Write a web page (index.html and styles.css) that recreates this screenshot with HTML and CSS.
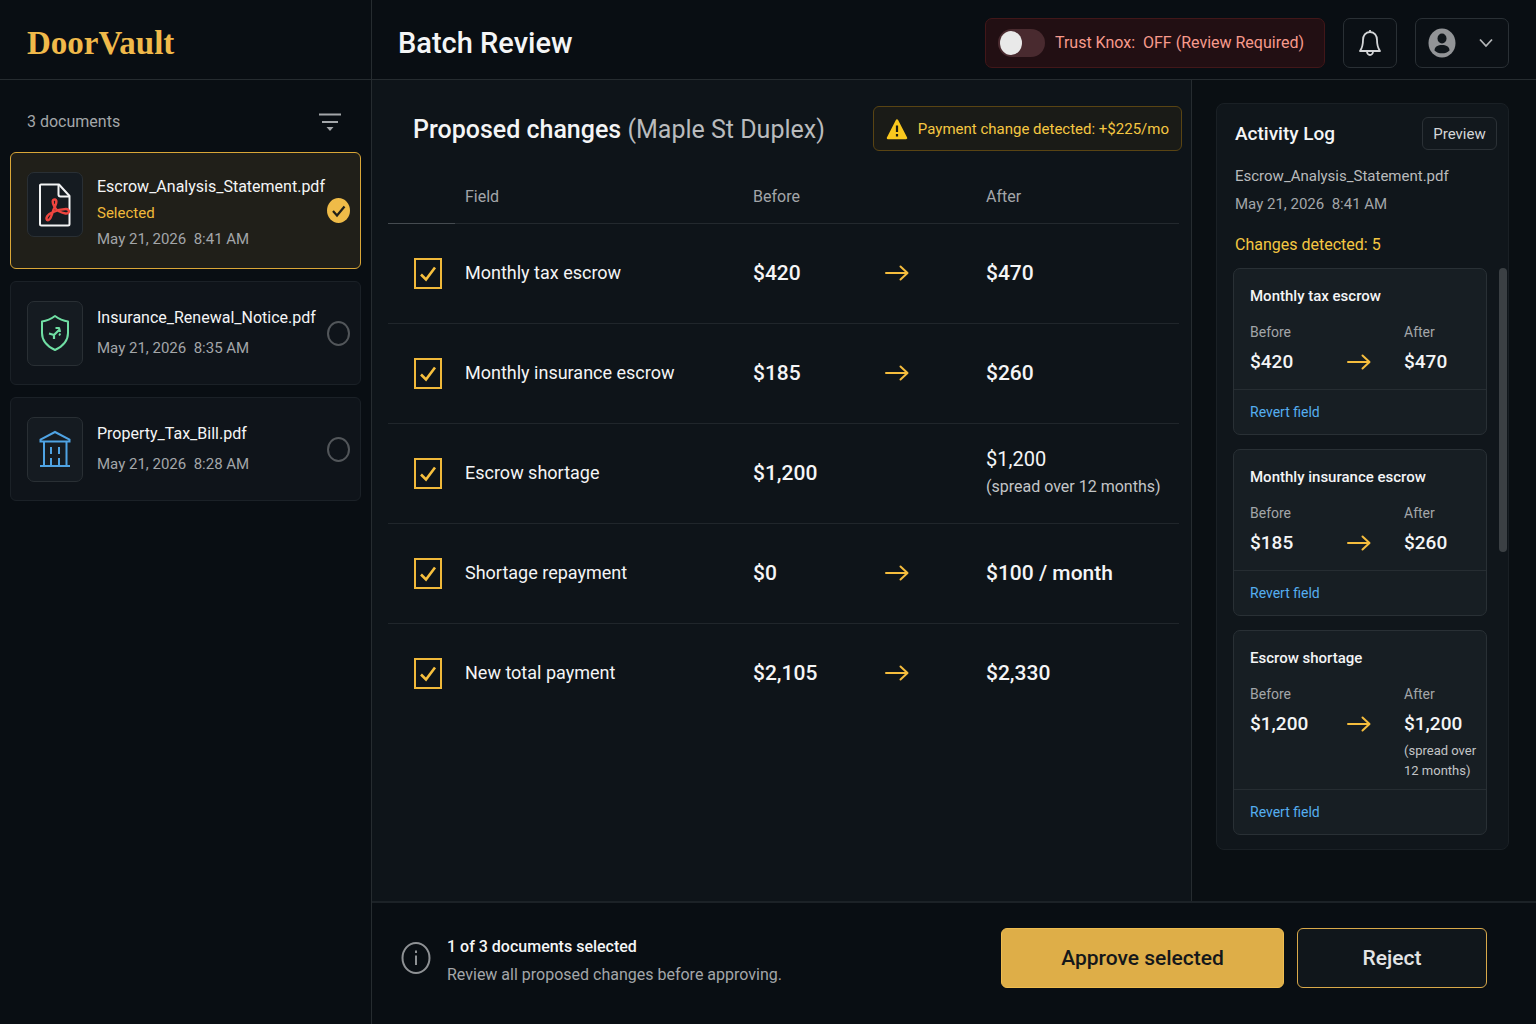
FILE: index.html
```html
<!DOCTYPE html>
<html lang="en">
<head>
    <meta charset="UTF-8">
    <meta name="viewport" content="width=device-width, initial-scale=1.0">
    <title>DoorVault - Batch Review</title>
    <link rel="stylesheet" href="styles.css">
</head>
<body>
    <!-- shared icons -->
    <svg class="icon-defs" aria-hidden="true">
        <symbol id="arrow" viewBox="0 0 24 18">
            <path d="M1 9h21M15.5 2.5L22.5 9l-7 6.500" fill="none" stroke="currentColor" stroke-width="2" stroke-linecap="round" stroke-linejoin="round"/>
        </symbol>
    </svg>

    <aside class="sidebar">
        <div class="brand"><a href="#">DoorVault</a></div>

        <div class="docs-header">
            <span>3 documents</span>
            <button class="filter-btn" type="button" aria-label="Filter documents">
                <svg width="24" height="20" viewBox="0 0 24 20">
                    <path d="M1 2.500h22M4 10h16" fill="none" stroke="#a3a6a9" stroke-width="2"/>
                    <path d="M8.500 15h7L12 19z" fill="#a3a6a9"/>
                </svg>
            </button>
        </div>

        <div class="doc-list">
            <label class="doc selected">
                <span class="doc-icon">
                    <svg width="32" height="44" viewBox="0 0 32 44" fill="none">
                        <path d="M2 1.500H20L30.500 13V41a1.500 1.500 0 0 1-1.500 1.500H2.500A1.500 1.500 0 0 1 1 41V2.500A1 1 0 0 1 2 1.500z" stroke="#f2f3f4" stroke-width="2" stroke-linejoin="round"/>
                        <path d="M19.500 2V11.500a2 2 0 0 0 2 2H30" stroke="#f2f3f4" stroke-width="2"/>
                        <path d="M14.500 26.500c2-3.500 4.500-9 1.500-10-3-.5-3 3.500-.5 7.500 2 3.500 6 5.500 11 6.500 4.500.5 4.500-4.500.5-4.500-4.500 0-10 1.500-14 3.500-4.500 2-6.500 5.500-5 7.500 2.500 1.500 5-4.500 6.500-10.500z" stroke="#ee453f" stroke-width="2.400" stroke-linejoin="round"/>
                    </svg>
                </span>
                <span class="doc-info">
                    <span class="doc-name">Escrow_Analysis_Statement.pdf</span>
                    <span class="doc-state">Selected</span>
                    <span class="doc-date">May 21, 2026&nbsp; 8:41 AM</span>
                </span>
                <input class="doc-radio" type="radio" name="doc" checked>
            </label>

            <label class="doc">
                <span class="doc-icon">
                    <svg width="30" height="38" viewBox="0 0 30 38" fill="none" stroke="#70dfa4" stroke-linejoin="round">
                        <path d="M15 2C11 5 7 6.800 2 7.500V19c0 8 5.500 13.500 13 17 7.500-3.500 13-9 13-17V7.500C23 6.800 19 5 15 2z" stroke-width="2"/>
                        <path d="M9 19.500l5 1.500v4M14 21l6-6M15.500 14h3.500l1 4M19 20l1.500 1" stroke-width="2.200"/>
                    </svg>
                </span>
                <span class="doc-info">
                    <span class="doc-name">Insurance_Renewal_Notice.pdf</span>
                    <span class="doc-date">May 21, 2026&nbsp; 8:35 AM</span>
                </span>
                <input class="doc-radio" type="radio" name="doc">
            </label>

            <label class="doc">
                <span class="doc-icon">
                    <svg width="32" height="38" viewBox="0 0 32 38" fill="none" stroke="#4fa3e3" stroke-width="2">
                        <path d="M1.500 11.500V9.500L16 2l14.500 7.500v2zM5 12v23M27.500 12v23M1 36h30M12 17v7M12 28v8M20 17v7M20 28v8"/>
                    </svg>
                </span>
                <span class="doc-info">
                    <span class="doc-name">Property_Tax_Bill.pdf</span>
                    <span class="doc-date">May 21, 2026&nbsp; 8:28 AM</span>
                </span>
                <input class="doc-radio" type="radio" name="doc">
            </label>
        </div>
    </aside>

    <div class="page">
        <header class="topbar">
            <h1>Batch Review</h1>
            <label class="trust">
                <input class="switch" type="checkbox">
                <span>Trust Knox:&nbsp; OFF (Review Required)</span>
            </label>
            <button class="icon-btn bell" type="button" aria-label="Notifications">
                <svg width="22" height="28" viewBox="0 0 22 28" fill="none" stroke="#d4d6d8" stroke-width="1.800" stroke-linejoin="round">
                    <path d="M11 3c-4.500 0-7 3.500-7 8 0 6-.8 8-3 11h20c-2.200-3-3-5-3-11 0-4.500-2.500-8-7-8zM11 3V1M8 22.500a3 3.500 0 0 0 6 0"/>
                </svg>
            </button>
            <button class="icon-btn account" type="button" aria-label="Account menu">
                <svg width="28" height="30" viewBox="0 0 28 30">
                    <ellipse cx="14" cy="15" rx="13.500" ry="14.500" fill="#929497"/>
                    <ellipse cx="14" cy="10.500" rx="4.500" ry="5" fill="#10161b"/>
                    <path d="M6.500 22.500c0-4 3.500-5.500 7.500-5.500s7.500 1.500 7.500 5.500c-2 2-4.500 2.800-7.500 2.800s-5.500-.8-7.500-2.800z" fill="#10161b"/>
                </svg>
                <svg width="14" height="10" viewBox="0 0 14 10">
                    <path d="M1 1.500l6 6.500 6-6.500" fill="none" stroke="#b4b6b8" stroke-width="1.800"/>
                </svg>
            </button>
        </header>

        <div class="content">
            <main class="changes">
                <div class="changes-header">
                    <h2>Proposed changes <span>(Maple St Duplex)</span></h2>
                    <div class="alert">
                        <svg width="22" height="22" viewBox="0 0 22 22">
                            <path d="M11 2.500L20 20H2z" fill="#fac81e" stroke="#fac81e" stroke-width="2.500" stroke-linejoin="round"/>
                            <path d="M11 7.500v6.500M11 16v2.500" stroke="#1b1a12" stroke-width="2.200"/>
                        </svg>
                        <span>Payment change detected: +$225/mo</span>
                    </div>
                </div>

                <table class="fields">
                    <thead>
                        <tr>
                            <th class="col-check" aria-label="Include"></th>
                            <th class="col-field">Field</th>
                            <th class="col-before">Before</th>
                            <th class="col-arrow" aria-label="Change"></th>
                            <th class="col-after">After</th>
                        </tr>
                    </thead>
                    <tbody>
                        <tr>
                            <td><input class="check" type="checkbox" id="f1" checked></td>
                            <td class="name"><label for="f1">Monthly tax escrow</label></td>
                            <td class="amount">$420</td>
                            <td><svg class="arrow"><use href="#arrow"/></svg></td>
                            <td class="amount">$470</td>
                        </tr>
                        <tr>
                            <td><input class="check" type="checkbox" id="f2" checked></td>
                            <td class="name"><label for="f2">Monthly insurance escrow</label></td>
                            <td class="amount">$185</td>
                            <td><svg class="arrow"><use href="#arrow"/></svg></td>
                            <td class="amount">$260</td>
                        </tr>
                        <tr>
                            <td><input class="check" type="checkbox" id="f3" checked></td>
                            <td class="name"><label for="f3">Escrow shortage</label></td>
                            <td class="amount">$1,200</td>
                            <td></td>
                            <td class="amount-note">$1,200<small>(spread over 12 months)</small></td>
                        </tr>
                        <tr>
                            <td><input class="check" type="checkbox" id="f4" checked></td>
                            <td class="name"><label for="f4">Shortage repayment</label></td>
                            <td class="amount">$0</td>
                            <td><svg class="arrow"><use href="#arrow"/></svg></td>
                            <td class="amount">$100 / month</td>
                        </tr>
                        <tr>
                            <td><input class="check" type="checkbox" id="f5" checked></td>
                            <td class="name"><label for="f5">New total payment</label></td>
                            <td class="amount">$2,105</td>
                            <td><svg class="arrow"><use href="#arrow"/></svg></td>
                            <td class="amount">$2,330</td>
                        </tr>
                    </tbody>
                </table>
            </main>

            <aside class="activity">
                <section class="log">
                    <div class="log-header">
                        <h3>Activity Log</h3>
                        <button class="preview-btn" type="button">Preview</button>
                    </div>
                    <p class="log-file">Escrow_Analysis_Statement.pdf</p>
                    <p class="log-date">May 21, 2026&nbsp; 8:41 AM</p>
                    <p class="log-count">Changes detected: 5</p>

                    <div class="log-body">
                        <div class="log-list">
                            <article class="entry">
                                <h4>Monthly tax escrow</h4>
                                <div class="entry-values">
                                    <div><span>Before</span><strong>$420</strong></div>
                                    <svg class="arrow"><use href="#arrow"/></svg>
                                    <div><span>After</span><strong>$470</strong></div>
                                </div>
                                <div class="entry-footer"><a href="#">Revert field</a></div>
                            </article>
                            <article class="entry">
                                <h4>Monthly insurance escrow</h4>
                                <div class="entry-values">
                                    <div><span>Before</span><strong>$185</strong></div>
                                    <svg class="arrow"><use href="#arrow"/></svg>
                                    <div><span>After</span><strong>$260</strong></div>
                                </div>
                                <div class="entry-footer"><a href="#">Revert field</a></div>
                            </article>
                            <article class="entry">
                                <h4>Escrow shortage</h4>
                                <div class="entry-values">
                                    <div><span>Before</span><strong>$1,200</strong></div>
                                    <svg class="arrow"><use href="#arrow"/></svg>
                                    <div><span>After</span><strong>$1,200</strong><small>(spread over 12 months)</small></div>
                                </div>
                                <div class="entry-footer"><a href="#">Revert field</a></div>
                            </article>
                        </div>
                        <div class="scrollbar"><div class="scroll-thumb"></div></div>
                    </div>
                </section>
            </aside>
        </div>

        <footer class="actions">
            <svg width="30" height="32" viewBox="0 0 30 32" fill="none" stroke="#8e9194">
                <ellipse cx="15" cy="16" rx="13.500" ry="15" stroke-width="2"/>
                <path d="M15 13.500V23M15 8.500v2.500" stroke-width="2"/>
            </svg>
            <div class="summary">
                <p class="summary-title">1 of 3 documents selected</p>
                <p class="summary-text">Review all proposed changes before approving.</p>
            </div>
            <button class="btn approve" type="button">Approve selected</button>
            <button class="btn reject" type="button">Reject</button>
        </footer>
    </div>
</body>
</html>
```
FILE: styles.css
```css
* {
    box-sizing: border-box;
}

body {
    margin: 0;
    min-height: 100vh;
    display: grid;
    grid-template-columns: 372px 1fr;
    background-color: #090e13;
    color: #f4f5f6;
    font-family: Roboto, "Liberation Sans", sans-serif;
    font-size: 16px;
    line-height: 20px;
}

h1, h2, h3, h4, p {
    margin: 0;
    font-weight: 500;
}

button, input {
    margin: 0;
    font-family: inherit;
    cursor: pointer;
}

a {
    text-decoration: none;
}

.icon-defs {
    position: absolute;
    width: 0;
    height: 0;
}

.arrow {
    display: block;
    width: 26px;
    height: 18px;
    color: #f5bd3d;
}

/* Sidebar */
.sidebar {
    border-right: 1px solid #262c30;
}

.brand {
    height: 80px;
    padding: 6px 27px 0;
    display: flex;
    align-items: center;
    border-bottom: 1px solid #262c30;
}

.brand a {
    color: #f0b94a;
    font-family: "Liberation Serif", serif;
    font-size: 33px;
    font-weight: bold;
    line-height: 40px;
}

.docs-header {
    display: flex;
    justify-content: space-between;
    align-items: center;
    height: 72px;
    padding: 12px 29px 0 27px;
    color: #a3a6a9;
}

.filter-btn {
    display: flex;
    padding: 0;
    border: none;
    background: none;
}

.doc-list {
    display: flex;
    flex-direction: column;
    gap: 12px;
    padding: 0 10px;
}

.doc {
    display: flex;
    align-items: center;
    min-height: 104px;
    padding: 0 10px 0 16px;
    border: 1px solid #1b2127;
    border-radius: 6px;
    background-color: #0f141a;
    cursor: pointer;
}

.doc.selected {
    min-height: 117px;
    border-color: #d9a637;
    background-color: #201f19;
}

.doc-icon {
    display: flex;
    justify-content: center;
    align-items: center;
    flex: none;
    width: 56px;
    height: 65px;
    margin-right: 14px;
    border: 1px solid #292f34;
    border-radius: 7px;
    background-color: #151b21;
}

.doc.selected .doc-icon {
    margin-bottom: 12px;
}

.doc-info {
    display: flex;
    flex-direction: column;
    flex: 1;
    gap: 10px;
    min-width: 0;
}

.doc.selected .doc-info {
    gap: 6px;
    padding-top: 4px;
}

.doc-name {
    white-space: nowrap;
}

.doc-state,
.doc-date {
    font-size: 15px;
}

.doc-state {
    color: #f0b93a;
}

.doc-date {
    color: #a3a6a9;
}

.doc-radio {
    appearance: none;
    flex: none;
    width: 23px;
    height: 25px;
    border: 2px solid #52565a;
    border-radius: 50%;
}

.doc-radio:checked {
    border: none;
    background: #efbb48 url("data:image/svg+xml,%3Csvg xmlns='http://www.w3.org/2000/svg' viewBox='0 0 23 25'%3E%3Cpath d='M6 13l4 4.500 7.500-9' fill='none' stroke='%23201f19' stroke-width='2.200'/%3E%3C/svg%3E") center / contain no-repeat;
}

/* Top bar */
.page {
    display: flex;
    flex-direction: column;
    min-width: 0;
}

.topbar {
    display: flex;
    align-items: center;
    height: 80px;
    padding: 6px 27px 0 26px;
    border-bottom: 1px solid #262c30;
}

.topbar h1 {
    flex: 1;
    font-size: 29px;
    line-height: 36px;
}

.trust {
    display: flex;
    align-items: center;
    gap: 10px;
    height: 50px;
    padding: 0 20px 0 12px;
    border: 1px solid #421719;
    border-radius: 7px;
    background-color: #220f13;
    color: #f79a8c;
    cursor: pointer;
}

.switch {
    appearance: none;
    display: flex;
    align-items: center;
    width: 47px;
    height: 28px;
    padding: 2px;
    border-radius: 14px;
    background-color: #492a2f;
}

.switch::before {
    content: "";
    width: 22px;
    height: 24px;
    border-radius: 50%;
    background-color: #e9e9e9;
}

.switch:checked::before {
    margin-left: auto;
}

.icon-btn {
    display: flex;
    justify-content: center;
    align-items: center;
    height: 50px;
    margin-left: 18px;
    padding: 0;
    border: 1px solid #2a3035;
    border-radius: 7px;
    background-color: #0b1015;
}

.bell {
    width: 54px;
}

.account {
    gap: 23px;
    width: 94px;
    padding-right: 3px;
}

/* Proposed changes */
.content {
    display: grid;
    grid-template-columns: 1fr 345px;
    flex: 1;
}

.changes {
    padding: 26px 9px 0 16px;
    background-color: #0e1419;
}

.changes-header {
    display: flex;
    justify-content: space-between;
    align-items: center;
    padding-left: 25px;
}

.changes-header h2 {
    padding-top: 2px;
    font-size: 25px;
    line-height: 32px;
}

.changes-header h2 span {
    color: #b9bbbd;
    font-weight: 400;
}

.alert {
    display: flex;
    align-items: center;
    gap: 10px;
    height: 45px;
    padding: 0 12px;
    border: 1px solid #594413;
    border-radius: 6px;
    background-color: #1a1b17;
    color: #f5c742;
    font-size: 15px;
}

.fields {
    width: calc(100% - 3px);
    border-collapse: collapse;
    table-layout: fixed;
    font-size: 18px;
    line-height: 24px;
}

.fields th {
    height: 72px;
    padding: 20px 0 0;
    border-bottom: 1px solid #23292e;
    color: #a3a6a9;
    font-size: 16px;
    font-weight: 400;
    text-align: left;
}

.fields th.col-check {
    width: 67px;
    border-bottom-color: #454b50;
}

.fields th.col-field {
    width: 298px;
    padding-left: 10px;
}

.col-before {
    width: 131px;
}

.col-arrow {
    width: 102px;
}

.fields td {
    height: 100px;
    padding: 0;
    border-bottom: 1px solid #20262b;
}

.fields td.name {
    padding-left: 10px;
}

.fields tr:last-child td {
    border-bottom: none;
}

.fields .amount {
    font-size: 21px;
    font-weight: 500;
}

.fields .amount-note {
    font-size: 20px;
    line-height: 28px;
}

.amount-note small {
    display: block;
    color: #c3c5c7;
    font-size: 16px;
}

.check {
    appearance: none;
    display: block;
    width: 28px;
    height: 31px;
    margin-left: 26px;
    border: 2px solid #f0b93a;
}

.check:checked {
    background: url("data:image/svg+xml,%3Csvg xmlns='http://www.w3.org/2000/svg' viewBox='0 0 24 27'%3E%3Cpath d='M5 14.500l5 5 9-12' fill='none' stroke='%23f7c03e' stroke-width='2.600'/%3E%3C/svg%3E") center / contain no-repeat;
}

/* Activity log */
.activity {
    padding: 23px 27px 40px 24px;
    border-left: 1px solid #262c30;
    background-color: #0a0f13;
}

.log {
    padding: 13px 1px 14px 16px;
    border: 1px solid #1a2025;
    border-radius: 8px;
    background-color: #10161b;
}

.log-header {
    display: flex;
    justify-content: space-between;
    align-items: center;
    padding: 0 10px 0 2px;
}

.log-header h3 {
    font-size: 19px;
    line-height: 24px;
}

.preview-btn {
    width: 75px;
    height: 33px;
    padding: 0;
    border: 1px solid #2b3136;
    border-radius: 6px;
    background-color: #12181d;
    color: #d4d6d8;
    font-size: 15px;
}

.log p {
    padding-left: 2px;
    font-weight: 400;
}

.log-file {
    margin-top: 16px;
    color: #b9bbbd;
    font-size: 15px;
}

.log-date {
    margin-top: 8px;
    color: #a3a6a9;
    font-size: 15px;
}

.log-count {
    margin-top: 21px;
    color: #f5c742;
}

.log-body {
    display: flex;
    gap: 12px;
    margin-top: 13px;
}

.log-list {
    display: flex;
    flex-direction: column;
    flex: 1;
    gap: 14px;
}

.entry {
    border: 1px solid #293035;
    border-radius: 7px;
    background-color: #171e23;
}

.entry h4 {
    padding: 17px 16px 0;
    font-size: 15px;
}

.entry-values {
    display: grid;
    grid-template-columns: 97px 57px 1fr;
    min-height: 83px;
    padding: 16px 4px 8px 16px;
}

.entry-values .arrow {
    width: 24px;
    margin-top: 31px;
}

.entry-values span,
.entry-values strong,
.entry-values small {
    display: block;
}

.entry-values span {
    color: #a3a6a9;
    font-size: 14px;
}

.entry-values strong {
    margin-top: 8px;
    font-size: 19px;
    font-weight: 500;
    line-height: 24px;
}

.entry-values small {
    margin-top: 5px;
    color: #c3c5c7;
    font-size: 13px;
}

.entry-footer {
    padding: 12px 16px;
    border-top: 1px solid #262d32;
    font-size: 14px;
}

.entry-footer a {
    color: #55aef0;
}

.scrollbar {
    width: 8px;
}

.scroll-thumb {
    height: 50%;
    border-radius: 4px;
    background-color: #3b4044;
}

/* Bottom bar */
.actions {
    display: flex;
    align-items: center;
    height: 123px;
    padding: 0 49px 12px 29px;
    border-top: 2px solid #1c2227;
}

.summary {
    flex: 1;
    padding: 6px 0 0 16px;
    line-height: 28px;
}

.summary-text {
    color: #a3a6a9;
    font-weight: 400;
}

.btn {
    height: 60px;
    border-radius: 6px;
    font-size: 21px;
    font-weight: 500;
}

.approve {
    width: 283px;
    border: 1px solid #efbd50;
    background-color: #deae48;
    color: #14171a;
}

.reject {
    width: 190px;
    margin-left: 13px;
    border: 1px solid #d9a94a;
    background-color: #10161b;
    color: #e4e5e6;
}
```
